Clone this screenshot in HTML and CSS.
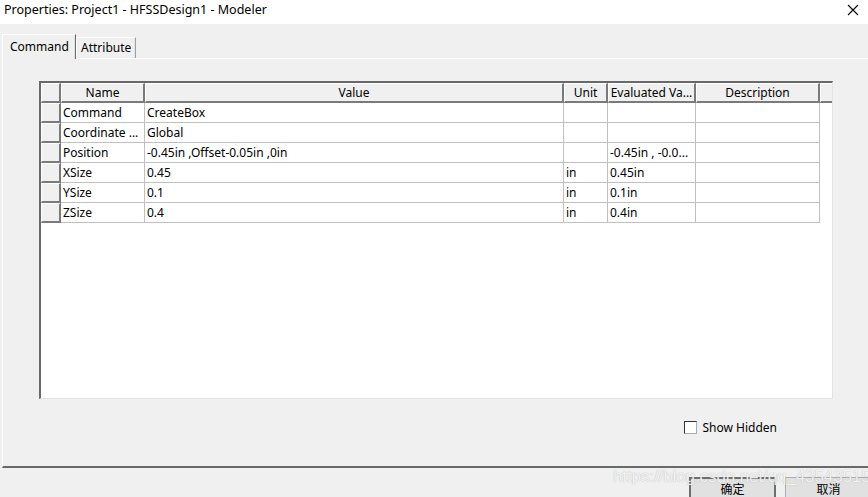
FILE: index.html
```html
<!DOCTYPE html>
<html>
<head>
<meta charset="utf-8">
<link rel="stylesheet" href="styles.css">
</head>
<body>
<div class="window">
  <div class="titlebar">
    <span class="title">Properties: Project1 - HFSSDesign1 - Modeler</span>
    <svg class="close" width="12" height="12" viewBox="0 0 12 12"><path d="M1 1 L11 11 M11 1 L1 11" stroke="#000" stroke-width="1.1" fill="none"/></svg>
  </div>
  <div class="tabstrip">
    <div class="tab active">Command</div>
    <div class="tab">Attribute</div>
  </div>
  <div class="panel">
    <div class="gridbox">
      <div class="row head">
        <div class="c rh"></div>
        <div class="c">Name</div>
        <div class="c">Value</div>
        <div class="c">Unit</div>
        <div class="c">Evaluated Va...</div>
        <div class="c">Description</div>
        <div class="c stub"></div>
      </div>
      <div class="row">
        <div class="c rh"></div><div class="c">Command</div><div class="c">CreateBox</div><div class="c"></div><div class="c"></div><div class="c"></div>
      </div>
      <div class="row">
        <div class="c rh"></div><div class="c">Coordinate ...</div><div class="c">Global</div><div class="c"></div><div class="c"></div><div class="c"></div>
      </div>
      <div class="row">
        <div class="c rh"></div><div class="c">Position</div><div class="c">-0.45in ,Offset-0.05in ,0in</div><div class="c"></div><div class="c">-0.45in , -0.0...</div><div class="c"></div>
      </div>
      <div class="row">
        <div class="c rh"></div><div class="c">XSize</div><div class="c">0.45</div><div class="c">in</div><div class="c">0.45in</div><div class="c"></div>
      </div>
      <div class="row">
        <div class="c rh"></div><div class="c">YSize</div><div class="c">0.1</div><div class="c">in</div><div class="c">0.1in</div><div class="c"></div>
      </div>
      <div class="row">
        <div class="c rh"></div><div class="c">ZSize</div><div class="c">0.4</div><div class="c">in</div><div class="c">0.4in</div><div class="c"></div>
      </div>
    </div>
    <div class="options">
      <label class="check"><span class="box"></span>Show Hidden</label>
    </div>
  </div>
  <div class="footer">
    <div class="btn default">确定</div>
    <div class="btn">取消</div>
  </div>
  <div class="watermark">https://blog.csdn.net/qq_43543515</div>
</div>
</body>
</html>
```
FILE: styles.css
```css
html, body {
  margin: 0;
  padding: 0;
}
body {
  width: 868px;
  height: 497px;
  overflow: hidden;
  background: #f0f0f0;
  font-family: "Noto Sans", "Noto Sans CJK SC", sans-serif;
  font-size: 12px;
  color: #000;
}
.window {
  position: relative;
  width: 868px;
  height: 497px;
  overflow: hidden;
}
.titlebar {
  height: 24px;
  background: #fff;
  display: flex;
  align-items: center;
  justify-content: space-between;
  padding: 0 9px 0 4px;
}
.title {
  font-size: 12.5px;
  line-height: 16px;
  margin-top: -4px;
}
.close {
  margin-top: -4px;
}
.tabstrip {
  height: 34px;
  display: flex;
  align-items: flex-end;
  padding-left: 2px;
}
.tab {
  height: 21px;
  box-sizing: border-box;
  border-top: 1px solid #fff;
  border-left: 1px solid #fff;
  border-right: 1px solid #a0a0a0;
  padding: 0 4px 0 4px;
  line-height: 20px;
  background: #f0f0f0;
  box-shadow: inset -1px 0 0 #e3e3e3;
}
.tab.active {
  position: relative;
  z-index: 1;
  height: 25px;
  margin-bottom: -1px;
  padding: 2px 6px 0 7px;
  line-height: 20px;
  width: 74px;
  border-right: 1px solid #696969;
}
.panel {
  margin-left: 2px;
  height: 385px;
  border-top: 1px solid #fff;
  border-left: 1px solid #fff;
  border-bottom: 2px solid #696969;
  padding-top: 22px;
  padding-left: 36px;
  box-sizing: content-box;
}
.gridbox {
  width: 794px;
  height: 318px;
  box-sizing: border-box;
  background: #fff;
  border-top: 2px solid #696969;
  border-left: 2px solid #696969;
  border-right: 1px solid #e3e3e3;
  border-bottom: 1px solid #e3e3e3;
}
.row {
  display: grid;
  grid-template-columns: 20px 84px 419px 44px 88px 124px;
  height: 20px;
}
.row.head {
  grid-template-columns: 20px 84px 419px 44px 88px 124px 12px;
}
.c {
  box-sizing: border-box;
  border-right: 1px solid #c0c0c0;
  border-bottom: 1px solid #c0c0c0;
  padding-left: 2px;
  padding-top: 1px;
  line-height: 18px;
  white-space: nowrap;
  overflow: hidden;
}
.head .c {
  background: #f0f0f0;
  text-align: center;
  padding-left: 0;
  padding-top: 1px;
  border-right: 2px solid #7a7a7a;
  border-bottom: 2px solid #7a7a7a;
  border-top: 1px solid #fff;
  border-left: 1px solid #fff;
  line-height: 16px;
}
.head .c.stub {
  border-right: none;
}
.c.rh {
  background: #f0f0f0;
  border-right: 2px solid #7a7a7a;
  border-bottom: 2px solid #7a7a7a;
  border-top: 1px solid #fff;
  border-left: 1px solid #fff;
}
.options {
  display: flex;
  justify-content: flex-end;
  width: 793px;
  margin-top: 22px;
}
.check {
  display: flex;
  align-items: center;
  gap: 5px;
  margin-right: 55px;
  line-height: 13px;
}
.box {
  width: 13px;
  height: 13px;
  box-sizing: border-box;
  background: #fff;
  border: 1px solid #333;
  border-right-color: #aaa;
  border-bottom-color: #aaa;
}
.footer {
  display: flex;
  gap: 9px;
  padding-top: 9px;
  padding-left: 689px;
}
.btn {
  flex: none;
  width: 87px;
  height: 24px;
  box-sizing: border-box;
  background: #e1e1e1;
  border: 1px solid #adadad;
  text-align: center;
  line-height: 24px;
  font-size: 12px;
}
.btn.default {
  border: 2px solid #6e6e6e;
  line-height: 22px;
}
.watermark {
  position: absolute;
  left: 613px;
  top: 467px;
  font-family: "Liberation Sans", Arial, sans-serif;
  font-size: 17px;
  letter-spacing: -0.1px;
  color: rgba(255, 255, 255, 0.85);
  text-shadow: 0 0 1px rgba(120, 120, 120, 0.6);
  white-space: nowrap;
}
```
